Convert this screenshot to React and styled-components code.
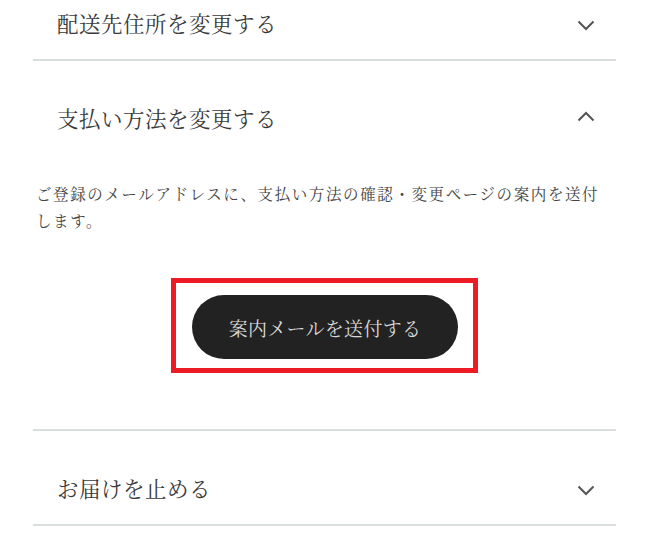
import React from "react";
import styled, { createGlobalStyle } from "styled-components";

const GlobalStyle = createGlobalStyle`
  html, body {
    margin: 0;
    padding: 0;
    background: #fff;
  }
  body {
    font-family: "Noto Serif CJK JP", "Noto Sans CJK JP", serif;
    color: #333;
  }
`;

const Page = styled.div`
  width: 651px;
  height: 536px;
  overflow: hidden;
  padding: 0 35px 0 33px;
  box-sizing: border-box;
`;

const List = styled.div`
  display: flex;
  flex-direction: column;
  margin-top: -34px;
`;

const Section = styled.section`
  border-bottom: 2px solid #d9dfdf;
`;

const Header = styled.div`
  display: flex;
  align-items: center;
  justify-content: space-between;
  height: 93px;
  padding: 21px 21px 0 24px;
  box-sizing: border-box;
  cursor: pointer;
`;

const Title = styled.span`
  font-size: 21.5px;
  font-weight: 400;
  color: #3a3a3a;
  letter-spacing: 0.5px;
  line-height: 1;
`;

const Chevron = styled.svg`
  width: 18px;
  height: 11px;
  flex: none;
  margin-top: ${(p) => (p.$up ? "-4px" : "4px")};
`;

const Body = styled.div`
  padding: 26px 0 56px;
`;

const Text = styled.p`
  margin: 0 0 0 3px;
  font-size: 15.5px;
  line-height: 27px;
  letter-spacing: 1.6px;
  color: #444;
`;

const Highlight = styled.div`
  box-sizing: border-box;
  width: 307px;
  margin: 44px auto 0;
  padding: 12px 15px 9px 16px;
  border: 5px solid #ed1c24;
`;

const SendButton = styled.button`
  display: flex;
  align-items: center;
  justify-content: center;
  width: 266px;
  height: 64px;
  border: none;
  border-radius: 32px;
  background: #222;
  color: #d8d8d8;
  font-family: inherit;
  font-size: 19px;
  letter-spacing: 0.3px;
  cursor: pointer;
`;

const Arrow = ({ up }) => (
  <Chevron $up={up} viewBox="0 0 18 11">
    <polyline
      points={up ? "1.5,9.5 9,2 16.5,9.5" : "1.5,1.5 9,9 16.5,1.5"}
      fill="none"
      stroke="#555"
      strokeWidth="2"
    />
  </Chevron>
);

export default function App() {
  return (
    <>
      <GlobalStyle />
      <Page>
        <List>
          <Section>
            <Header>
              <Title>配送先住所を変更する</Title>
              <Arrow />
            </Header>
          </Section>
          <Section>
            <Header>
              <Title>支払い方法を変更する</Title>
              <Arrow up />
            </Header>
            <Body>
              <Text>
                ご登録のメールアドレスに、支払い方法の確認・変更ページの案内を送付します。
              </Text>
              <Highlight>
                <SendButton>案内メールを送付する</SendButton>
              </Highlight>
            </Body>
          </Section>
          <Section>
            <Header>
              <Title>お届けを止める</Title>
              <Arrow />
            </Header>
          </Section>
        </List>
      </Page>
    </>
  );
}
